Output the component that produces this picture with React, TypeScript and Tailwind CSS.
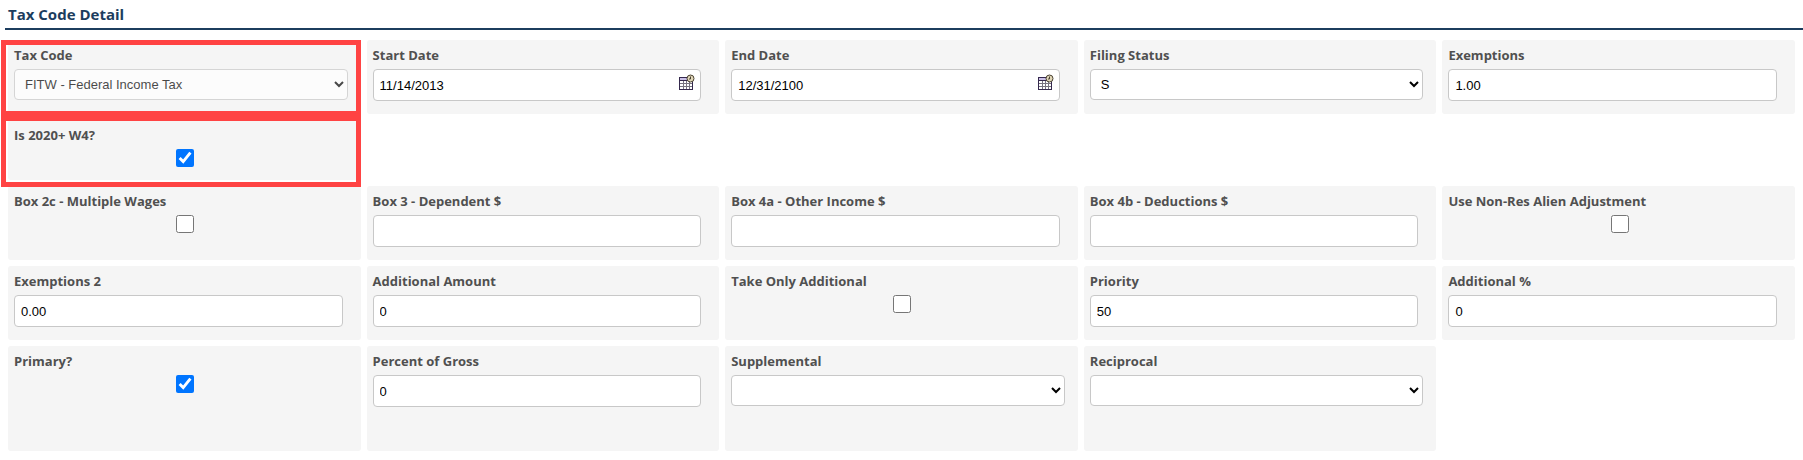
import { useState } from 'react'
import type { ReactNode } from 'react'

const labelClass = 'block w-fit text-[13px] leading-5 font-bold text-[#505050]'
const controlClass =
  'block rounded-[4px] border border-[#c8c8c8] bg-white px-1.5 font-["Liberation_Sans",Arial,sans-serif] text-[13px] text-black'

function Cell({ children }: { children: ReactNode }) {
  return <div className="relative rounded-[3px] bg-[#f5f5f5] px-1.5 pt-[5px]">{children}</div>
}

function Row({ children, className = 'min-h-[74px]' }: { children: ReactNode; className?: string }) {
  return <div className={`grid grid-cols-5 gap-1.5 ${className}`}>{children}</div>
}

function CalendarIcon() {
  return (
    <svg width="17" height="17" viewBox="0 0 17 17" aria-hidden="true">
      <rect x="1.5" y="3.5" width="13" height="12" fill="#fff" stroke="#35294d" />
      <rect x="2" y="4" width="12" height="2" fill="#c9bfe6" />
      <path d="M1 6.5h14" stroke="#35294d" />
      <path d="M2 9.5h12M2 12.5h12M5.5 7v8M8.5 7v8M11.5 7v8" stroke="#77737f" />
      <path d="M14.5 8v8M1 15.5h14" stroke="#35294d" />
      <circle cx="12.5" cy="4.5" r="3.5" fill="#e0d6b8" stroke="#4a4232" />
      <path d="M12.5 2.5v2.5h-1.5" fill="none" stroke="#4a4232" />
    </svg>
  )
}

interface FieldProps {
  id: string
  label: string
}

function TextField({ id, label, value = '' }: FieldProps & { value?: string }) {
  const [text, setText] = useState(value)

  return (
    <Cell>
      <label htmlFor={id} className={labelClass}>{label}</label>
      <input
        id={id}
        type="text"
        value={text}
        onChange={(e) => setText(e.target.value)}
        className={`${controlClass} mt-1 h-8 w-[calc(100%-12px)]`}
      />
    </Cell>
  )
}

function DateField({ id, label, value }: FieldProps & { value: string }) {
  const [text, setText] = useState(value)

  return (
    <Cell>
      <label htmlFor={id} className={labelClass}>{label}</label>
      <div className="relative mt-1 w-[calc(100%-12px)]">
        <input
          id={id}
          type="text"
          value={text}
          onChange={(e) => setText(e.target.value)}
          className={`${controlClass} h-8 w-full`}
        />
        <button type="button" aria-label={`Choose ${label}`} className="absolute top-[5px] right-1.5">
          <CalendarIcon />
        </button>
      </div>
    </Cell>
  )
}

interface SelectFieldProps extends FieldProps {
  options: string[]
  disabled?: boolean
  children?: ReactNode
}

function SelectField({ id, label, options, disabled, children }: SelectFieldProps) {
  return (
    <Cell>
      <label htmlFor={id} className={labelClass}>{label}</label>
      <select
        id={id}
        disabled={disabled}
        className={`${controlClass} mt-1 h-[31px] w-[calc(100%-7px)] disabled:opacity-70`}
      >
        {options.map((option) => (
          <option key={option}>{option}</option>
        ))}
      </select>
      {children}
    </Cell>
  )
}

interface CheckFieldProps extends FieldProps {
  checked?: boolean
  children?: ReactNode
}

function CheckField({ id, label, checked = false, children }: CheckFieldProps) {
  return (
    <Cell>
      <label htmlFor={id} className={labelClass}>{label}</label>
      <input
        id={id}
        type="checkbox"
        defaultChecked={checked}
        className="mt-1 ml-[calc(50%-8px)] block size-[18px]"
      />
      {children}
    </Cell>
  )
}

function Highlight({ className }: { className: string }) {
  return <div className={`pointer-events-none absolute z-10 border-5 border-[#ff4343] ${className}`} />
}

export default function App() {
  return (
    <main className='bg-white pb-2 font-["Open_Sans","Noto_Sans",sans-serif]'>
      <h1 className="ml-[5px] h-[30px] border-b-2 border-[#1c3d5e] pl-[3px] text-[15px] leading-7 font-bold text-[#1c3d5e]">
        Tax Code Detail
      </h1>

      <form className="mt-2.5 flex flex-col gap-1.5 px-2">
        <Row>
          <SelectField id="taxCode" label="Tax Code" options={['FITW - Federal Income Tax']} disabled>
            <Highlight className="top-0 right-0 -bottom-0.5 -left-[7px]" />
          </SelectField>
          <DateField id="startDate" label="Start Date" value="11/14/2013" />
          <DateField id="endDate" label="End Date" value="12/31/2100" />
          <SelectField id="filingStatus" label="Filing Status" options={['S']} />
          <TextField id="exemptions" label="Exemptions" value="1.00" />
        </Row>

        <Row className="min-h-[60px]">
          <CheckField id="is2020W4" label="Is 2020+ W4?" checked>
            <Highlight className="-top-1 right-0 -bottom-[7px] -left-[7px]" />
          </CheckField>
        </Row>

        <Row>
          <CheckField id="box2c" label="Box 2c - Multiple Wages" />
          <TextField id="box3" label="Box 3 - Dependent $" />
          <TextField id="box4a" label="Box 4a - Other Income $" />
          <TextField id="box4b" label="Box 4b - Deductions $" />
          <CheckField id="nonResAlien" label="Use Non-Res Alien Adjustment" />
        </Row>

        <Row>
          <TextField id="exemptions2" label="Exemptions 2" value="0.00" />
          <TextField id="additionalAmount" label="Additional Amount" value="0" />
          <CheckField id="takeOnlyAdditional" label="Take Only Additional" />
          <TextField id="priority" label="Priority" value="50" />
          <TextField id="additionalPercent" label="Additional %" value="0" />
        </Row>

        <Row className="min-h-[105px]">
          <CheckField id="primary" label="Primary?" checked />
          <TextField id="percentOfGross" label="Percent of Gross" value="0" />
          <SelectField id="supplemental" label="Supplemental" options={['']} />
          <SelectField id="reciprocal" label="Reciprocal" options={['']} />
        </Row>
      </form>
    </main>
  )
}
